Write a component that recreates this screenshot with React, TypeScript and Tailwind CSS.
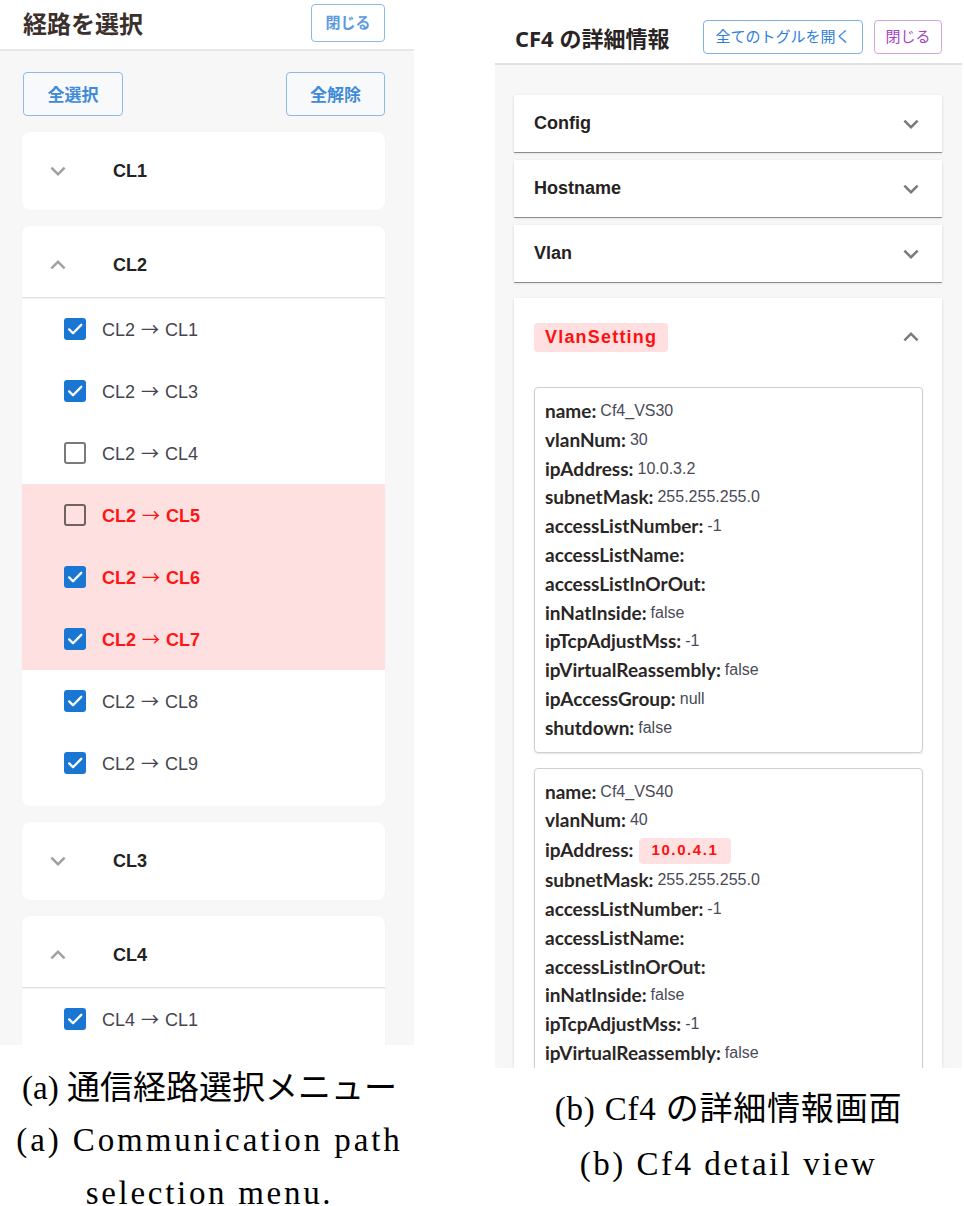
import React from "react";

const sans = { fontFamily: '"Liberation Sans", Arial, "Noto Sans CJK JP", sans-serif' };
const arrowFont = { fontFamily: '"Noto Sans CJK JP", sans-serif' };

function Chevron({ up, className }: { up?: boolean; className?: string }) {
  return (
    <svg viewBox="0 0 24 24" className={className} fill="currentColor">
      {up ? (
        <path d="M12 8l-6 6 1.41 1.41L12 10.83l4.59 4.58L18 14z" />
      ) : (
        <path d="M16.59 8.59 12 13.17 7.41 8.59 6 10l6 6 6-6z" />
      )}
    </svg>
  );
}

function Checkbox({ checked, dark }: { checked: boolean; dark?: boolean }) {
  if (checked) {
    return (
      <span className="w-[22px] h-[22px] rounded-[3px] bg-[#1976d2] flex items-center justify-center shrink-0">
        <svg viewBox="0 0 24 24" className="w-[20px] h-[20px]" fill="none">
          <path d="M5 12.5l4.6 4.6L19.5 7" stroke="white" strokeWidth="2.8" strokeLinecap="round" strokeLinejoin="round" />
        </svg>
      </span>
    );
  }
  return (
    <span
      className={`w-[22px] h-[22px] rounded-[3px] border-2 shrink-0 ${
        dark ? "border-[#6e6262]" : "border-[#7a7a7a]"
      }`}
    />
  );
}

type Item = { from: string; to: string; checked: boolean; hl?: boolean };

function PathRow({ it }: { it: Item }) {
  return (
    <div className={`h-[62px] flex items-center pl-[42px] gap-[16px] ${it.hl ? "bg-[#ffe0e0]" : ""}`}>
      <Checkbox checked={it.checked} dark={it.hl} />
      <span
        className={`text-[18px] whitespace-nowrap ${it.hl ? "font-bold text-[#ff1414]" : "text-[#454550]"}`}
        style={sans}
      >
        {it.from}
        <span className="mx-[6px] text-[18px] font-normal" style={arrowFont}>
          →
        </span>
        {it.to}
      </span>
    </div>
  );
}

function GroupCard({ title, items }: { title: string; items?: Item[] }) {
  if (!items) {
    return (
      <div className="bg-white rounded-[8px] h-[78px] flex items-center shadow-[0_0_2px_rgba(0,0,0,0.04)]">
        <Chevron className="w-[30px] h-[30px] ml-[21px] text-[#a0a0a0]" />
        <span className="ml-[40px] text-[18px] font-bold text-[#222]" style={sans}>
          {title}
        </span>
      </div>
    );
  }
  return (
    <div className="bg-white rounded-[8px] pb-[12px] shadow-[0_0_2px_rgba(0,0,0,0.04)]">
      <div className="h-[72px] pt-[7px] flex items-center border-b border-[#e0e0e0] shadow-[0_1px_1px_rgba(0,0,0,0.04)]">
        <Chevron up className="w-[30px] h-[30px] ml-[21px] text-[#a0a0a0]" />
        <span className="ml-[40px] text-[18px] font-bold text-[#222]" style={sans}>
          {title}
        </span>
      </div>
      {items.map((it) => (
        <PathRow key={it.from + it.to} it={it} />
      ))}
    </div>
  );
}

const keyFont = { fontFamily: 'Lato, "Open Sans", sans-serif' };

function KV({ k, v, pill }: { k: string; v?: string; pill?: boolean }) {
  if (pill) {
    return (
      <div className="h-[31px] flex items-center whitespace-nowrap">
        <span className="text-[19px] font-bold text-[#2a2626]" style={keyFont}>
          {k}:
        </span>
        <span
          className="ml-[6px] h-[26px] px-[12px] rounded-[4px] bg-[#ffe1e1] flex items-center text-[15px] font-bold text-[#ff1010] tracking-[1.6px]"
          style={sans}
        >
          {v}
        </span>
      </div>
    );
  }
  return (
    <div className="h-[28.8px] leading-[28.8px] whitespace-nowrap">
      <span className="text-[19px] font-bold text-[#2a2626]" style={keyFont}>
        {k}:
      </span>
      {v !== undefined && (
        <span className="ml-[4px] text-[16px] text-[#4a4a58] align-[2px]" style={sans}>
          {v}
        </span>
      )}
    </div>
  );
}

function AccCollapsed({ title }: { title: string }) {
  return (
    <div className="bg-white h-[57px] flex items-center justify-between pl-[20px] pr-[16px] shadow-[0_1px_0_0_rgba(0,0,0,0.38),0_1px_3px_rgba(0,0,0,0.14)]">
      <span className="text-[18px] font-bold text-[#262222]" style={sans}>
        {title}
      </span>
      <Chevron className="w-[30px] h-[30px] text-[#7a7a7a]" />
    </div>
  );
}

const vlan1: [string, string?][] = [
  ["name", "Cf4_VS30"],
  ["vlanNum", "30"],
  ["ipAddress", "10.0.3.2"],
  ["subnetMask", "255.255.255.0"],
  ["accessListNumber", "-1"],
  ["accessListName"],
  ["accessListInOrOut"],
  ["inNatInside", "false"],
  ["ipTcpAdjustMss", "-1"],
  ["ipVirtualReassembly", "false"],
  ["ipAccessGroup", "null"],
  ["shutdown", "false"],
];

const vlan2: [string, string?][] = [
  ["name", "Cf4_VS40"],
  ["vlanNum", "40"],
  ["ipAddress", "10.0.4.1"],
  ["subnetMask", "255.255.255.0"],
  ["accessListNumber", "-1"],
  ["accessListName"],
  ["accessListInOrOut"],
  ["inNatInside", "false"],
  ["ipTcpAdjustMss", "-1"],
  ["ipVirtualReassembly", "false"],
  ["ipAccessGroup", "null"],
  ["shutdown", "false"],
];

export default function App() {
  const cl2: Item[] = [
    { from: "CL2", to: "CL1", checked: true },
    { from: "CL2", to: "CL3", checked: true },
    { from: "CL2", to: "CL4", checked: false },
    { from: "CL2", to: "CL5", checked: false, hl: true },
    { from: "CL2", to: "CL6", checked: true, hl: true },
    { from: "CL2", to: "CL7", checked: true, hl: true },
    { from: "CL2", to: "CL8", checked: true },
    { from: "CL2", to: "CL9", checked: true },
  ];
  const cl4: Item[] = [{ from: "CL4", to: "CL1", checked: true }];

  const caption = {
    fontFamily: '"Liberation Serif", "Times New Roman", "Noto Sans CJK JP", serif',
  };
  const jp = { fontFamily: '"Noto Sans CJK JP", sans-serif' };

  return (
    <div className="w-[964px] h-[1206px] bg-white flex overflow-hidden">
      {/* Left column */}
      <div className="w-[414px] flex flex-col shrink-0">
        <div className="h-[1045px] shrink-0 overflow-hidden bg-[#f7f7f8] flex flex-col">
          <div className="h-[51px] bg-white border-b-2 border-[#e8e8e8] flex items-center justify-between pl-[23px] pr-[29px] pb-[4px] shrink-0">
            <span className="text-[24px] font-bold text-[#3a302c]" style={jp}>
              経路を選択
            </span>
            <button
              className="w-[74px] h-[38px] border border-[#8fb8ea] rounded-[4px] text-[15px] font-bold text-[#5c9be0] bg-white"
              style={jp}
            >
              閉じる
            </button>
          </div>
          <div className="flex justify-between pl-[23px] pr-[29px] pt-[21px] shrink-0">
            <button
              className="w-[100px] h-[44px] border border-[#8fb8ea] rounded-[4px] text-[17px] font-bold text-[#3f8ad8] bg-[#f8f9fb]"
              style={jp}
            >
              全選択
            </button>
            <button
              className="w-[99px] h-[44px] border border-[#8fb8ea] rounded-[4px] text-[17px] font-bold text-[#3f8ad8] bg-[#f8f9fb]"
              style={jp}
            >
              全解除
            </button>
          </div>
          <div className="flex flex-col gap-[16px] pl-[22px] pr-[29px] pt-[16px]">
            <GroupCard title="CL1" />
            <GroupCard title="CL2" items={cl2} />
            <GroupCard title="CL3" />
            <GroupCard title="CL4" items={cl4} />
          </div>
        </div>
        <div className="pt-[17px] pl-[5px] text-center text-[33px] leading-[52px] text-black" style={caption}>
          <div className="whitespace-nowrap">(a) 通信経路選択メニュー</div>
          <div className="whitespace-nowrap tracking-[2.9px]">(a) Communication path</div>
          <div className="whitespace-nowrap tracking-[2.7px] leading-[26px] mt-[14px]">selection menu.</div>
        </div>
      </div>

      {/* Right column */}
      <div className="ml-[81px] w-[467px] flex flex-col shrink-0">
        <div className="h-[1068px] shrink-0 overflow-hidden bg-[#f7f7f7] flex flex-col">
          <div className="h-[65px] bg-white border-b-2 border-[#e2e2e2] flex items-center justify-between pl-[20px] pr-[20px] pt-[10px] shrink-0">
            <span
              className="text-[22px] font-bold text-[#2a2424] mt-[3px]"
              style={{ fontFamily: '"Open Sans", "Noto Sans CJK JP", sans-serif' }}
            >
              CF4 の詳細情報
            </span>
            <div className="flex gap-[11px]">
              <button
                className="w-[160px] h-[34px] border border-[#80b1ec] rounded-[4px] text-[15px] text-[#2f7ed8] bg-white"
                style={jp}
              >
                全てのトグルを開く
              </button>
              <button
                className="w-[68px] h-[34px] border border-[#d2a3de] rounded-[4px] text-[15px] text-[#a544c2] bg-white"
                style={jp}
              >
                閉じる
              </button>
            </div>
          </div>
          <div className="pl-[19px] pr-[20px] pt-[30px] flex flex-col">
            <div className="flex flex-col gap-[8px]">
              <AccCollapsed title="Config" />
              <AccCollapsed title="Hostname" />
              <AccCollapsed title="Vlan" />
            </div>
            <div className="mt-[16px] bg-white shadow-[0_1px_3px_rgba(0,0,0,0.14)]">
              <div className="h-[72px] pt-[6px] flex items-center justify-between pl-[20px] pr-[16px]">
                <span
                  className="h-[29px] px-[11px] rounded-[4px] bg-[#ffdfdf] flex items-center text-[18px] font-bold text-[#ff1010] tracking-[1.2px]"
                  style={sans}
                >
                  VlanSetting
                </span>
                <Chevron up className="w-[30px] h-[30px] text-[#7a7a7a]" />
              </div>
              <div className="pt-[17px] pl-[20px] pr-[19px] flex flex-col gap-[15px]">
                <div className="border border-[#cfcfcf] rounded-[4px] py-[9px] px-[10px] shadow-[0_1px_2px_rgba(0,0,0,0.1)]">
                  {vlan1.map(([k, v]) => (
                    <KV key={k} k={k} v={v} />
                  ))}
                </div>
                <div className="border border-[#cfcfcf] rounded-[4px] py-[9px] px-[10px] shadow-[0_1px_2px_rgba(0,0,0,0.1)]">
                  {vlan2.map(([k, v]) => (
                    <KV key={k} k={k} v={v} pill={k === "ipAddress"} />
                  ))}
                </div>
              </div>
            </div>
          </div>
        </div>
        <div className="pt-[14px] text-center text-[33px] leading-[55px] text-black" style={caption}>
          <div className="whitespace-nowrap tracking-[0.8px]">(b) Cf4 の詳細情報画面</div>
          <div className="whitespace-nowrap tracking-[2.5px]">(b) Cf4 detail view</div>
        </div>
      </div>
    </div>
  );
}
